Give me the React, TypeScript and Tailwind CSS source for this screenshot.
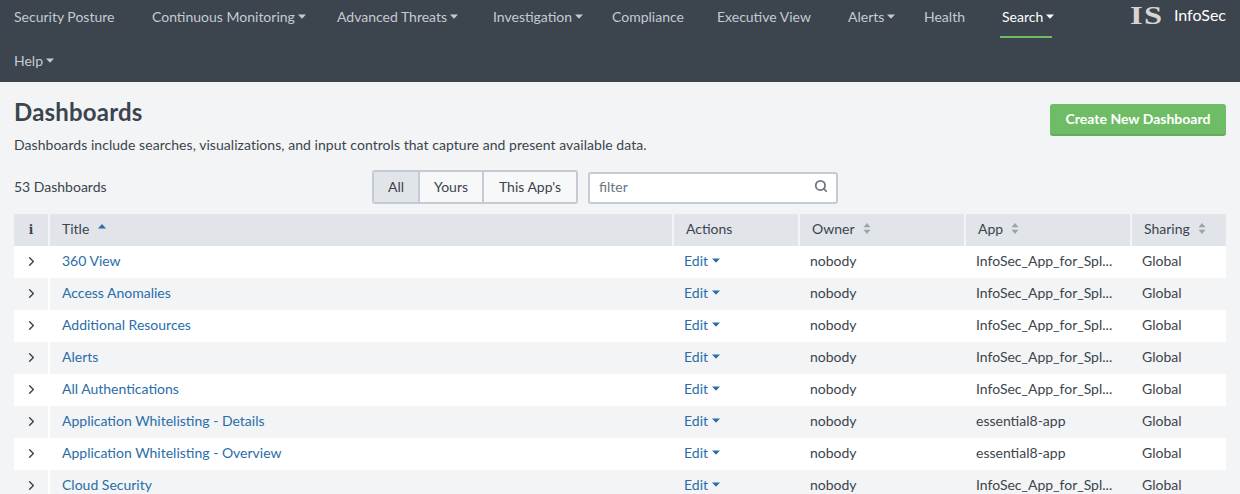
import React from "react";
import { ChevronRight, Search } from "lucide-react";

const navItems = [
    { label: "Security Posture", width: "w-[138px]", caret: false },
    { label: "Continuous Monitoring", width: "w-[185px]", caret: true },
    { label: "Advanced Threats", width: "w-[156px]", caret: true },
    { label: "Investigation", width: "w-[119px]", caret: true },
    { label: "Compliance", width: "w-[105px]", caret: false },
    { label: "Executive View", width: "w-[131px]", caret: false },
    { label: "Alerts", width: "w-[76px]", caret: true },
    { label: "Health", width: "w-[78px]", caret: false },
];

const rows = [
    { title: "360 View", app: "InfoSec_App_for_Spl..." },
    { title: "Access Anomalies", app: "InfoSec_App_for_Spl..." },
    { title: "Additional Resources", app: "InfoSec_App_for_Spl..." },
    { title: "Alerts", app: "InfoSec_App_for_Spl..." },
    { title: "All Authentications", app: "InfoSec_App_for_Spl..." },
    { title: "Application Whitelisting - Details", app: "essential8-app" },
    { title: "Application Whitelisting - Overview", app: "essential8-app" },
    { title: "Cloud Security", app: "InfoSec_App_for_Spl..." },
];

const gridCols = "grid grid-cols-[34px_622px_124px_164px_164px_94px] gap-x-[2px]";

const Caret = () => (
    <svg className="shrink-0" width="8" height="5" viewBox="0 0 8 5">
        <path d="M0 0.5h8L4 4.8z" fill="currentColor" />
    </svg>
);

const SortIcon = () => (
    <svg className="ml-[8px] text-[#9aa4ad]" width="8" height="11" viewBox="0 0 8 11">
        <path d="M4 0l3.5 4.2h-7zM4 11L.5 6.8h7z" fill="currentColor" />
    </svg>
);

const App: React.FC = () => {
    return (
        <div className="w-[1240px] h-[494px] overflow-hidden bg-[#f2f4f5] font-['Lato','Liberation_Sans',sans-serif] text-[14px] text-[#3c444d]">
            <header className="h-[82px] bg-[#3c444d] flex">
                <nav className="w-[1100px] pl-[14px] flex flex-wrap content-start text-[#c3cbd4]">
                    {navItems.map((item) => (
                        <div key={item.label} className={`${item.width} h-[38px] mb-[6px] pt-[7px]`}>
                            <a className="h-[18px] flex items-center gap-[3px] whitespace-nowrap">
                                {item.label}
                                {item.caret && <Caret />}
                            </a>
                        </div>
                    ))}
                    <div className="w-[52px] -ml-[2px] pl-[2px] h-[38px] mb-[6px] pt-[7px] text-white border-b-2 border-[#6fbc66]">
                        <a className="h-[18px] flex items-center gap-[3px] whitespace-nowrap">
                            Search
                            <Caret />
                        </a>
                    </div>
                    <div className="w-[60px] h-[38px] pt-[7px]">
                        <a className="h-[18px] flex items-center gap-[3px]">
                            Help
                            <Caret />
                        </a>
                    </div>
                </nav>
                <div className="flex-1 flex items-start pt-[5px] pl-[30px] pr-[14px] justify-between text-white">
                    <span className="font-['Liberation_Serif',serif] font-bold text-[26px] leading-[22px] tracking-[1px] text-[#d5d5d5] scale-x-[1.25] origin-left">IS</span>
                    <span className="text-[16px] leading-[18px] mt-[1px]">InfoSec</span>
                </div>
            </header>

            <main className="px-[14px]">
                <div className="flex justify-between items-start">
                    <div>
                        <h1 className="mt-[15px] text-[24px] leading-[30px] font-bold tracking-[0.2px] text-[#3c444d]">Dashboards</h1>
                        <p className="mt-[9px] leading-[18px] tracking-[0.05px]">
                            Dashboards include searches, visualizations, and input controls that capture and present available data.
                        </p>
                    </div>
                    <button className="mt-[22px] w-[176px] h-[32px] pb-[2px] rounded-[3px] bg-[#6fbc66] border-b-2 border-[#65aa5d] text-white font-bold">
                        Create New Dashboard
                    </button>
                </div>

                <div className="mt-[18px] h-[32px] flex items-end">
                    <div className="w-[358px] self-center pb-[4px]">53 Dashboards</div>
                    <div className="flex h-[34px] border-2 border-[#c3cbd4] rounded-[3px] bg-[#f7f8fa]">
                        <span className="w-[44px] pb-[2px] flex items-center justify-center bg-[#e1e5ea]">All</span>
                        <span className="w-[64px] pb-[2px] flex items-center justify-center border-l-2 border-[#c3cbd4]">Yours</span>
                        <span className="w-[94px] pb-[2px] flex items-center justify-center border-l-2 border-[#c3cbd4]">This App's</span>
                    </div>
                    <div className="ml-[10px] w-[250px] h-[32px] border-2 border-[#c3cbd4] rounded-[3px] bg-white flex items-center justify-between pl-[9px] pr-[8px] text-[#6b7580]">
                        <span className="pb-[4px]">filter</span>
                        <Search className="text-[#6b7580] -mt-[4px]" size={14} strokeWidth={3} />
                    </div>
                </div>

                <div className="mt-[10px] w-[1212px]">
                    <div className={`${gridCols} h-[32px] [&>div]:bg-[#e1e5ea] [&>div]:flex [&>div]:items-center`}>
                        <div className="justify-center font-['DejaVu_Serif',serif] font-bold text-[12px]">i</div>
                        <div className="pl-[12px] pb-[4px]">
                            Title
                            <svg className="ml-[9px] -mt-[4px] text-[#2e6da4]" width="8" height="5" viewBox="0 0 8 5">
                                <path d="M4 0l4 4.5H0z" fill="currentColor" />
                            </svg>
                        </div>
                        <div className="pl-[12px] pb-[4px]">Actions</div>
                        <div className="pl-[12px] pb-[4px]">Owner<SortIcon /></div>
                        <div className="pl-[12px] pb-[4px]">App<SortIcon /></div>
                        <div className="pl-[12px] pb-[4px]">Sharing<SortIcon /></div>
                    </div>
                    {rows.map((row, i) => (
                        <div
                            key={row.title}
                            className={`${gridCols} h-[32px] items-center ${i % 2 === 0 ? "bg-white" : "bg-[#f2f4f5]"}`}
                        >
                            <div className="h-[32px] pb-[2px] flex items-center justify-center border-r-2 border-white -mr-[2px]">
                                <ChevronRight size={15} strokeWidth={2.25} className="text-[#3c444d]" />
                            </div>
                            <a className="pl-[12px] pb-[4px] text-[#2a6da8]">{row.title}</a>
                            <a className="pl-[10px] pb-[4px] text-[#2a6da8] flex items-center gap-[4px]">
                                Edit
                                <Caret />
                            </a>
                            <div className="pl-[10px] pb-[4px]">nobody</div>
                            <div className="pl-[10px] pb-[4px]">{row.app}</div>
                            <div className="pl-[10px] pb-[4px]">Global</div>
                        </div>
                    ))}
                </div>
            </main>
        </div>
    );
};

export default App;
